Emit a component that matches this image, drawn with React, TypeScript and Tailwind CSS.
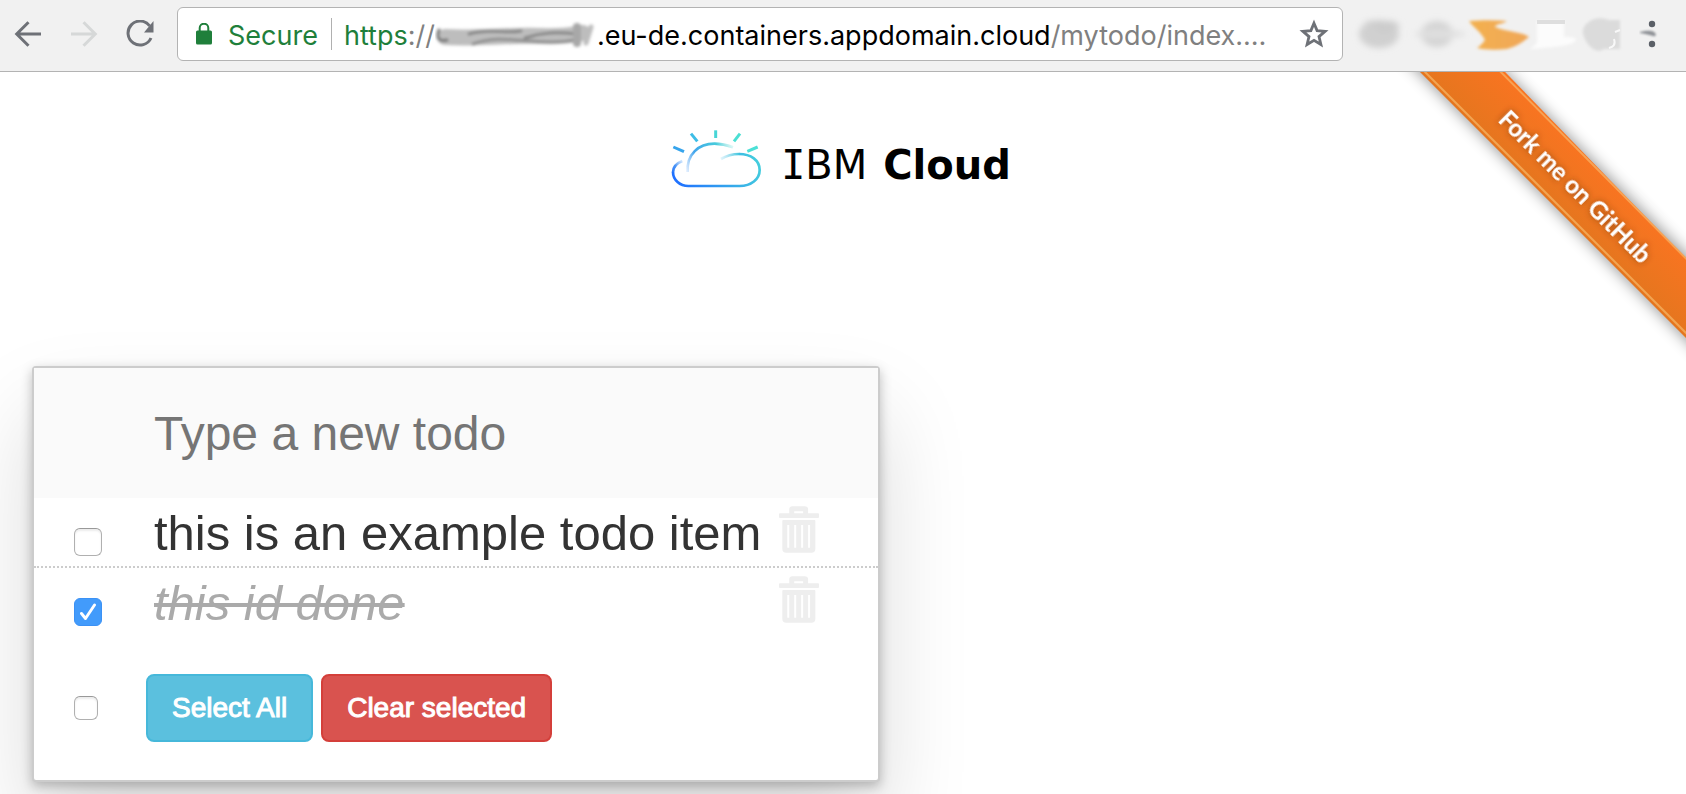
import { useState } from "react";

function BackIcon() {
  return (
    <svg width="28" height="28" viewBox="0 0 28 28" fill="none" stroke="currentColor" strokeWidth="3">
      <path d="M27 14H3M14.500 2.200 2.700 14l11.800 11.800" />
    </svg>
  );
}

function ForwardIcon() {
  return (
    <svg width="28" height="28" viewBox="0 0 28 28" fill="none" stroke="currentColor" strokeWidth="3">
      <path d="M1 14h24M13.500 2.200 25.300 14 13.500 25.800" />
    </svg>
  );
}

function ReloadIcon() {
  return (
    <svg width="28" height="28" viewBox="0 0 28 28">
      <path d="M23.600 5.800A12 12 0 1 0 25 18" fill="none" stroke="currentColor" strokeWidth="3" />
      <path d="M27.500 1v11.500H18z" fill="currentColor" />
    </svg>
  );
}

function LockIcon() {
  return (
    <svg width="16" height="22" viewBox="0 0 16 22">
      <rect y="7.500" width="16" height="14" rx="1.500" fill="currentColor" />
      <path d="M3.700 8V5a4.300 4.300 0 0 1 8.600 0v3" fill="none" stroke="currentColor" strokeWidth="2" />
    </svg>
  );
}

function StarIcon() {
  return (
    <svg width="30" height="30" viewBox="0 0 30 30" fill="none" stroke="currentColor" strokeWidth="2.800">
      <path d="M15 4.200l3.100 7.400 8 .7-6.100 5.300 1.900 7.900-6.900-4.200-6.900 4.200L10 17.600l-6.100-5.300 8-.7z" />
    </svg>
  );
}

function Smudge() {
  return (
    <svg className="shrink-0" width="162" height="40" viewBox="0 0 162 40" aria-hidden="true">
      <defs>
        <filter id="soft" x="-20%" y="-60%" width="140%" height="220%">
          <feGaussianBlur stdDeviation="1.800" />
        </filter>
      </defs>
      <g filter="url(#soft)" fill="none" strokeLinecap="round">
        <path d="M10 21C40 23 70 19 104 20s32-2 44-3" stroke="#bdbdbd" strokeWidth="16" />
        <path d="M4 14c-3 8 0 12 8 10" stroke="#777" strokeWidth="3" />
        <path d="M34 18c20-6 36 0 52-3M90 22c18-6 32-6 52-4" stroke="#858585" strokeWidth="3" />
        <path d="M38 28c20-8 40-4 56-3s30 2 46-1" stroke="#8f8f8f" strokeWidth="3" />
        <path d="M142 11v16" stroke="#a8a8a8" strokeWidth="8" />
        <path d="M156 11l-5 16" stroke="#bdbdbd" strokeWidth="5" />
      </g>
    </svg>
  );
}

function ExtensionBlurs() {
  return (
    <svg width="296" height="48" viewBox="0 0 296 48" aria-hidden="true">
      <defs>
        <filter id="haze" x="-30%" y="-60%" width="160%" height="220%">
          <feGaussianBlur stdDeviation="3" />
        </filter>
        <filter id="edge" x="-20%" y="-40%" width="140%" height="180%">
          <feGaussianBlur stdDeviation="1.500" />
        </filter>
        <linearGradient id="ember" x1="0" x2="1">
          <stop offset="0" stopColor="#f3b04e" />
          <stop offset="1" stopColor="#f0a758" />
        </linearGradient>
      </defs>
      <g filter="url(#haze)">
        <ellipse cx="36" cy="24" rx="20" ry="14" fill="#d0d0d0" />
        <path d="M22 11h28l8 5-18 8z" fill="#cccccc" />
        <ellipse cx="94" cy="24" rx="16" ry="13" fill="#d4d4d4" />
        <ellipse cx="97" cy="24" rx="26" ry="4" fill="#e0e0e0" />
      </g>
      <g filter="url(#edge)">
        <path
          d="M126 11c14-1 26-1 38 0-4 3-12 3-12 6 12 5 28 5 34 10-6 5-14 10-22 12-10 1-22 1-30-1 4-3 6-5 8-8-4-8-12-13-16-19z"
          fill="url(#ember)"
        />
        <path d="M194 11h27v16c6 0 12 0 12 3-4 6-20 7-46 9 6-4 8-6 7-11z" fill="#fcfcfc" />
        <path d="M240 24c-2-10 12-20 26-14h11v29h-16c-8 6-18-4-21-15z" fill="#dbdbdb" />
      </g>
      <path d="M194 10h28v4h-28z" fill="#dedede" />
      <path d="M271 29c2 6-1 8-5 9M272 22l5-2" stroke="#f8f8f8" strokeWidth="2" fill="none" />
    </svg>
  );
}

function MenuDots() {
  return (
    <svg width="20" height="30" viewBox="0 0 20 30" fill="currentColor">
      <circle cx="13" cy="5" r="3.200" />
      <circle cx="13" cy="25" r="3.200" />
      <path d="M1 13c5-1 10-2 14 0 3 2 2 5-1 4-4-1-7-2-13-3z" opacity=".65" style={{ filter: "blur(1px)" }} />
    </svg>
  );
}

function BrowserBar() {
  return (
    <header className="flex h-[72px] items-center border-b border-[#b3b3b3] bg-[#f1f1f1] pb-1 text-[#6e7177]">
      <nav className="flex w-[177px] shrink-0 items-center gap-7 pl-[14px]" aria-label="Browser navigation">
        <button type="button" aria-label="Back"><BackIcon /></button>
        <button type="button" aria-label="Forward" className="text-[#d6d8d8]" disabled><ForwardIcon /></button>
        <button type="button" aria-label="Reload"><ReloadIcon /></button>
      </nav>
      <div className="flex h-[54px] min-w-0 flex-1 items-center rounded-md border border-[#b3b3b3] bg-white pl-[18px] pr-[13px] font-['Inter',sans-serif] text-[27px] leading-8">
        <span className="flex shrink-0 items-center gap-4 text-[#1f7f3b]">
          <LockIcon />
          <span className="pt-1">Secure</span>
        </span>
        <span className="ml-[13px] h-8 w-px shrink-0 bg-[#b0b0b0]" />
        <div className="ml-3 flex min-w-0 flex-1 items-center whitespace-nowrap pt-1">
          <span className="text-[#1f7f3b]">https</span>
          <span className="text-[#808080]">://</span>
          <Smudge />
          <span className="text-black">.eu-de.containers.appdomain.cloud</span>
          <span className="text-[#808080]">/mytodo/index.…</span>
        </div>
        <button type="button" aria-label="Bookmark this page"><StarIcon /></button>
      </div>
      <div className="flex w-[343px] shrink-0 items-center">
        <ExtensionBlurs />
        <button type="button" aria-label="Menu" className="text-[#5b6067]"><MenuDots /></button>
      </div>
    </header>
  );
}

function CloudMark() {
  return (
    <svg width="90" height="58" viewBox="0 0 270 174" fill="none" strokeWidth="8" strokeLinecap="butt" aria-hidden="true">
      <defs>
        <linearGradient id="base" gradientUnits="userSpaceOnUse" x1="20" y1="170" x2="260" y2="70">
          <stop offset="0" stopColor="#1f70ff" />
          <stop offset="1" stopColor="#45d0dc" />
        </linearGradient>
        <linearGradient id="leftFade" gradientUnits="userSpaceOnUse" x1="4" y1="130" x2="34" y2="94">
          <stop offset="0" stopColor="#2474fb" />
          <stop offset=".5" stopColor="#4a94f6" />
          <stop offset="1" stopColor="#9bc8fa" stopOpacity=".5" />
        </linearGradient>
        <linearGradient id="arch" gradientUnits="userSpaceOnUse" x1="48" y1="124" x2="184" y2="48">
          <stop offset="0" stopColor="#8fc0fa" stopOpacity=".3" />
          <stop offset=".3" stopColor="#42a5ec" />
          <stop offset=".75" stopColor="#47cbdc" />
          <stop offset="1" stopColor="#8ce6e0" stopOpacity=".3" />
        </linearGradient>
        <linearGradient id="rightFade" gradientUnits="userSpaceOnUse" x1="148" y1="86" x2="204" y2="74">
          <stop offset="0" stopColor="#a0dcf3" stopOpacity=".3" />
          <stop offset="1" stopColor="#43c6de" />
        </linearGradient>
      </defs>
      <path d="M6 126c0 24 21 42 46 42h154c34 0 60-20 60-48 0-29-26-48-62-48" stroke="url(#base)" />
      <path d="M6 127c0-14 10-27 28-34" stroke="url(#leftFade)" />
      <path d="M50 126C46 72 84 41 130 41c22 0 38 4 56 11" stroke="url(#arch)" />
      <path d="M150 87c16-10 34-15 55-15" stroke="url(#rightFade)" />
      <g strokeWidth="9">
        <path d="M7 51l32 14" stroke="#36a4ec" />
        <path d="M60 11l19 23" stroke="#3dbde6" />
        <path d="M134 1v23" stroke="#47d5d6" />
        <path d="M207 11l-18 23" stroke="#4bdfd3" />
        <path d="M260 51l-31 13" stroke="#4be0d6" />
      </g>
    </svg>
  );
}

function Logo() {
  return (
    <h1 className="flex h-[58px] items-center justify-center gap-5 pr-1 text-[40px] leading-[58px] text-black">
      <CloudMark />
      <span className="flex items-baseline gap-4 pt-3 font-['DejaVu_Sans',sans-serif]">
        <span>
          <span className="font-['DejaVu_Sans_Mono',monospace]">I</span>BM
        </span>
        <span className="font-bold">Cloud</span>
      </span>
    </h1>
  );
}

function Ribbon() {
  return (
    <a href="#fork" className="absolute right-0 top-0" aria-label="Fork me on GitHub">
      <svg width="300" height="300" viewBox="0 0 300 300">
        <defs>
          <linearGradient id="orange" gradientUnits="userSpaceOnUse" x1="100" y1="70" x2="144" y2="26">
            <stop offset="0" stopColor="#e4761e" />
            <stop offset="1" stopColor="#f97421" />
          </linearGradient>
          <filter id="cast" x="-20%" y="-20%" width="140%" height="140%">
            <feGaussianBlur stdDeviation="8" />
          </filter>
          <filter id="glow" x="-10%" y="-10%" width="120%" height="120%">
            <feDropShadow dx="0" dy="0" stdDeviation="3" floodColor="#703000" floodOpacity=".7" />
          </filter>
        </defs>
        <path d="M4-30l346 346v-82L88-30z" fill="#000" opacity=".45" filter="url(#cast)" />
        <path d="M4-30l346 346v-78L90-30z" fill="url(#orange)" />
        <path d="M9-30l340 340" stroke="#f2a452" strokeWidth="2" />
        <path d="M85-30l270 272" stroke="#f8a253" strokeWidth="2" />
        <text
          transform="translate(111 49) rotate(45)"
          fill="#fff"
          fontFamily="Lato, sans-serif"
          fontWeight="700"
          fontSize="24"
          filter="url(#glow)"
        >
          Fork me on GitHub
        </text>
      </svg>
    </a>
  );
}

function TrashIcon() {
  return (
    <svg width="40" height="47" viewBox="0 0 121 141" fill="currentColor" fillRule="evenodd" aria-hidden="true">
      <path d="M3 21h28V10q0-10 10-10h36q11 0 11 10v11h30q3 0 3 3v9q0 3-3 3H3q-3 0-3-3v-9q0-3 3-3zM46 15v6h27v-6z" />
      <path d="M13 42h94q3 0 3 3v84q0 12-12 12H22q-12 0-12-12V45q0-3 3-3zM25 57v69h6V57zM46 57v69h6V57zM67 57v69h6V57zM88 57v69h6V57z" />
    </svg>
  );
}

type TickProps = { label: string; checked: boolean; onChange: () => void; small?: boolean };

function Tick({ label, checked, onChange, small }: TickProps) {
  return (
    <span className="grid place-items-center">
      <input
        type="checkbox"
        aria-label={label}
        checked={checked}
        onChange={onChange}
        className={
          (small ? "size-6 " : "size-7 ") +
          "col-start-1 row-start-1 appearance-none rounded-md border border-[#b0b0b0] border-t-[#999] bg-white shadow-[inset_0_2px_2px_#ededed] checked:border-[#3b91f5] checked:bg-[#429bfb] checked:shadow-none"
        }
      />
      {checked && (
        <svg
          className="pointer-events-none col-start-1 row-start-1"
          width="18"
          height="18"
          viewBox="0 0 18 18"
          fill="none"
          stroke="#fff"
          strokeWidth="2.900"
          strokeLinecap="round"
          strokeLinejoin="round"
        >
          <path d="M2.500 10.500l4 5L15.500 2" />
        </svg>
      )}
    </span>
  );
}

type Todo = { id: number; text: string; done: boolean };

const initialTodos: Todo[] = [
  { id: 1, text: "this is an example todo item", done: false },
  { id: 2, text: "this id done", done: true },
];

function TodoCard() {
  const [todos, setTodos] = useState(initialTodos);
  const [draft, setDraft] = useState("");
  const allDone = todos.length > 0 && todos.every((t) => t.done);
  const setAll = (done: boolean) => setTodos(todos.map((t) => ({ ...t, done })));

  return (
    <section className="w-full max-w-[848px] rounded-[4px] border-2 border-[#ccc] bg-white font-['Liberation_Sans',Arial,sans-serif] text-[#333] shadow-[0_4px_12px_rgba(0,0,0,0.25),0_50px_90px_rgba(0,0,0,0.15)]">
      <form
        onSubmit={(e) => {
          e.preventDefault();
          if (draft) setTodos([...todos, { id: Date.now(), text: draft, done: false }]);
          setDraft("");
        }}
      >
        <input
          type="text"
          aria-label="New todo"
          placeholder="Type a new todo"
          value={draft}
          onChange={(e) => setDraft(e.target.value)}
          className="block h-[130px] w-full bg-[#fafafa] pl-[120px] text-5xl outline-none placeholder:text-[#757575]"
        />
      </form>
      <ul>
        {todos.map((todo) => (
          <li key={todo.id} className="flex h-[70px] items-center border-b-2 border-dotted border-[#ccc] pl-10 last:border-transparent">
            <span className="w-20 shrink-0 pt-5">
              <span className="flex">
                <Tick
                  label={todo.text}
                  checked={todo.done}
                  onChange={() => setTodos(todos.map((t) => (t.id === todo.id ? { ...t, done: !t.done } : t)))}
                />
              </span>
            </span>
            <span className="flex-1 whitespace-nowrap pt-[2px] text-[49px] leading-[60px]">
              <span className={todo.done ? "italic text-[#aaa] line-through" : ""}>{todo.text}</span>
            </span>
            <button
              type="button"
              aria-label={"Delete " + todo.text}
              className="mr-[59px] pb-[6px] text-[#eee]"
              onClick={() => setTodos(todos.filter((t) => t.id !== todo.id))}
            >
              <TrashIcon />
            </button>
          </li>
        ))}
      </ul>
      <div className="flex items-center px-10 pb-[38px] pt-9">
        <span className="flex w-[72px] shrink-0">
          <Tick small label="Toggle all" checked={allDone} onChange={() => setAll(!allDone)} />
        </span>
        <div className="flex gap-2 text-[28px] leading-10 text-white [-webkit-text-stroke:1px_#fff]">
          <button type="button" onClick={() => setAll(true)} className="rounded-lg border-2 border-[#46b8da] bg-[#5bc0de] px-6 py-3">
            Select All
          </button>
          <button
            type="button"
            onClick={() => setTodos(todos.filter((t) => !t.done))}
            className="rounded-lg border-2 border-[#d43f3a] bg-[#d9534f] px-6 py-3"
          >
            Clear selected
          </button>
        </div>
      </div>
    </section>
  );
}

export default function App() {
  return (
    <div className="flex min-h-screen flex-col bg-white">
      <BrowserBar />
      <main className="relative flex-1 overflow-hidden px-8 pt-[58px]">
        <Logo />
        <Ribbon />
        <div className="pt-[178px]">
          <TodoCard />
        </div>
      </main>
    </div>
  );
}
